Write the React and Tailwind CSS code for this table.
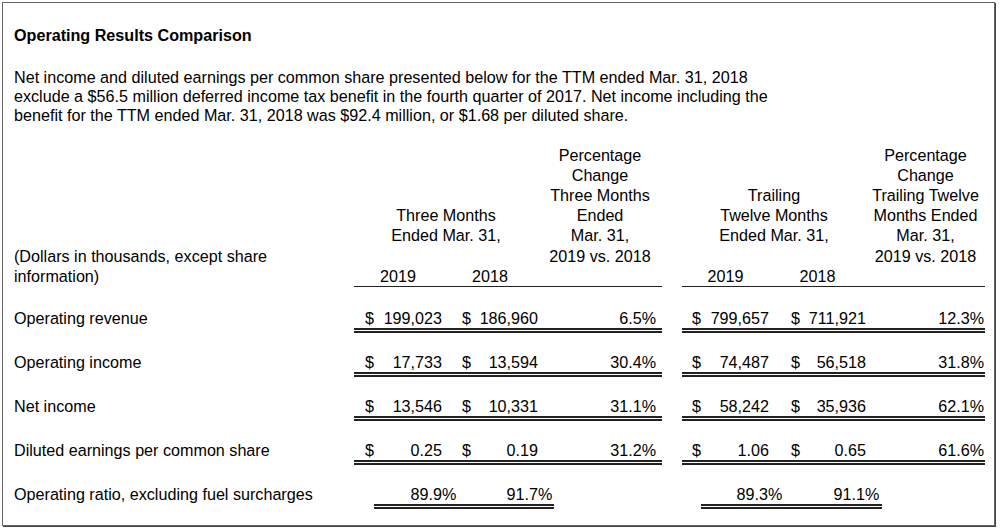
function DataRow({ label, a, b, pa, c, d, pc, first }) {
  return (
    <div className={first ? "flex pt-[21px] leading-[20px]" : "flex pt-[19px] leading-[20px]"}>
      <div className="w-[340px] whitespace-nowrap">{label}</div>
      <div className="w-[308px] flex border-b-[5px] border-double border-[#222]">
        <div className="w-[88px] pl-[11px] flex justify-between">
          <span>$</span>
          <span>{a}</span>
        </div>
        <div className="w-[96px] pl-[20px] flex justify-between">
          <span>$</span>
          <span>{b}</span>
        </div>
        <div className="w-[124px] pr-[6px] text-right">{pa}</div>
      </div>
      <div className="w-[20px]" />
      <div className="w-[303px] flex border-b-[5px] border-double border-[#222]">
        <div className="w-[87px] pl-[10px] flex justify-between">
          <span>$</span>
          <span>{c}</span>
        </div>
        <div className="w-[97px] pl-[22px] flex justify-between">
          <span>$</span>
          <span>{d}</span>
        </div>
        <div className="w-[119px] pr-[1px] text-right">{pc}</div>
      </div>
    </div>
  );
}

function GroupHeader({ top, w1, w2, wp, pct }) {
  return (
    <div className="flex border-b border-[#222]">
      <div className="flex flex-col" style={{ width: w1 + w2 }}>
        <div className="flex-1 flex flex-col justify-end text-center whitespace-nowrap">
          {top.map((t, i) => (
            <div key={i}>{t}</div>
          ))}
          <div className="h-[20.2px]" />
        </div>
        <div className="flex">
          <div className="text-center" style={{ width: w1 }}>2019</div>
          <div className="text-center" style={{ width: w2 }}>2018</div>
        </div>
      </div>
      <div className="text-center whitespace-nowrap" style={{ width: wp }}>
        {pct.map((t, i) => (
          <div key={i}>{t}</div>
        ))}
        <div className="h-[20.2px]" />
      </div>
    </div>
  );
}

export default function App() {
  return (
    <div className="w-[1000px] h-[532px] bg-white p-[2px] font-['Liberation_Sans',Arial,sans-serif] text-[16.15px] text-black">
      <div className="w-[993px] h-[524px] border border-[#666] shadow-[1px_1px_0_#444] pl-[11px]">
        <h2 className="mt-[22px] font-bold leading-[20px]">Operating Results Comparison</h2>
        <p className="mt-[23px] leading-[19.2px] whitespace-nowrap">
          Net income and diluted earnings per common share presented below for the TTM ended Mar. 31, 2018
          <br />
          exclude a $56.5 million deferred income tax benefit in the fourth quarter of 2017. Net income including the
          <br />
          benefit for the TTM ended Mar. 31, 2018 was $92.4 million, or $1.68 per diluted share.
        </p>

        <div className="mt-[19px] flex leading-[20.2px]">
          <div className="w-[340px] flex flex-col justify-end whitespace-nowrap pb-[1px]">
            <div>(Dollars in thousands, except share</div>
            <div>information)</div>
          </div>
          <div className="w-[308px]">
            <GroupHeader
              top={["Three Months", "Ended Mar. 31,"]}
              w1={88}
              w2={96}
              wp={124}
              pct={["Percentage", "Change", "Three Months", "Ended", "Mar. 31,", "2019 vs. 2018"]}
            />
          </div>
          <div className="w-[20px]" />
          <div className="w-[303px]">
            <GroupHeader
              top={["Trailing", "Twelve Months", "Ended Mar. 31,"]}
              w1={87}
              w2={97}
              wp={119}
              pct={["Percentage", "Change", "Trailing Twelve", "Months Ended", "Mar. 31,", "2019 vs. 2018"]}
            />
          </div>
        </div>

        <DataRow first label="Operating revenue" a="199,023" b="186,960" pa="6.5%" c="799,657" d="711,921" pc="12.3%" />
        <DataRow label="Operating income" a="17,733" b="13,594" pa="30.4%" c="74,487" d="56,518" pc="31.8%" />
        <DataRow label="Net income" a="13,546" b="10,331" pa="31.1%" c="58,242" d="35,936" pc="62.1%" />
        <DataRow label="Diluted earnings per common share" a="0.25" b="0.19" pa="31.2%" c="1.06" d="0.65" pc="61.6%" />

        <div className="flex pt-[19px] leading-[20px]">
          <div className="w-[340px] whitespace-nowrap">Operating ratio, excluding fuel surcharges</div>
          <div className="w-[308px]">
            <div className="ml-[20px] w-[180px] flex border-b-[5px] border-double border-[#222]">
              <div className="w-[68px] text-right">89.9</div>
              <div className="w-[96px] flex justify-between">
                <span>%</span>
                <span>91.7</span>
              </div>
              <div className="w-[16px]">%</div>
            </div>
          </div>
          <div className="w-[20px]" />
          <div className="w-[303px]">
            <div className="ml-[19px] w-[181px] flex border-b-[5px] border-double border-[#222]">
              <div className="w-[67px] text-right">89.3</div>
              <div className="w-[97px] flex justify-between">
                <span>%</span>
                <span>91.1</span>
              </div>
              <div className="w-[17px]">%</div>
            </div>
          </div>
        </div>
      </div>
    </div>
  );
}
